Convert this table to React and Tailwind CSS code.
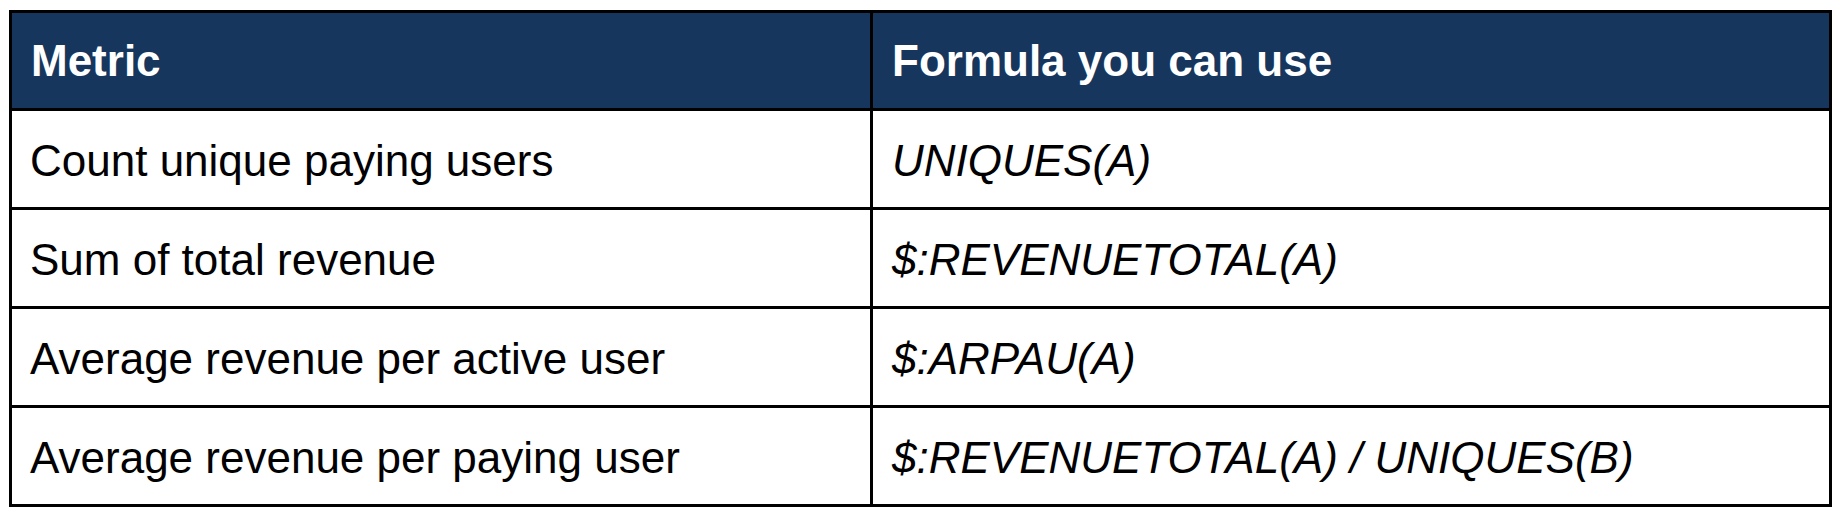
export default function App() {
  const rows = [
    ["Count unique paying users", "UNIQUES(A)"],
    ["Sum of total revenue", "$:REVENUETOTAL(A)"],
    ["Average revenue per active user", "$:ARPAU(A)"],
    ["Average revenue per paying user", "$:REVENUETOTAL(A) / UNIQUES(B)"],
  ];
  return (
    <div className="bg-white w-[1848px] h-[516px] pt-[10px] pl-[9px]" style={{ fontFamily: '"Liberation Sans", Arial, sans-serif' }}>
      <div className="w-[1823px] border-[3px] border-black">
        <div className="grid grid-cols-[858px_3px_956px] h-[95px] bg-[#17365d] text-white font-bold text-[44px] leading-[51px]">
          <div className="flex items-center pl-[19px]">Metric</div>
          <div className="bg-black" />
          <div className="flex items-center pl-[19px]">Formula you can use</div>
        </div>
        {rows.map(([m, f]) => (
          <div key={m} className="grid grid-cols-[858px_3px_956px] h-[99px] border-t-[3px] border-black text-black text-[44px] leading-[51px]">
            <div className="flex items-center pl-[18px] pt-[2px]">{m}</div>
            <div className="bg-black" />
            <div className="flex items-center pl-[19px] pt-[2px] italic">{f}</div>
          </div>
        ))}
      </div>
    </div>
  );
}
